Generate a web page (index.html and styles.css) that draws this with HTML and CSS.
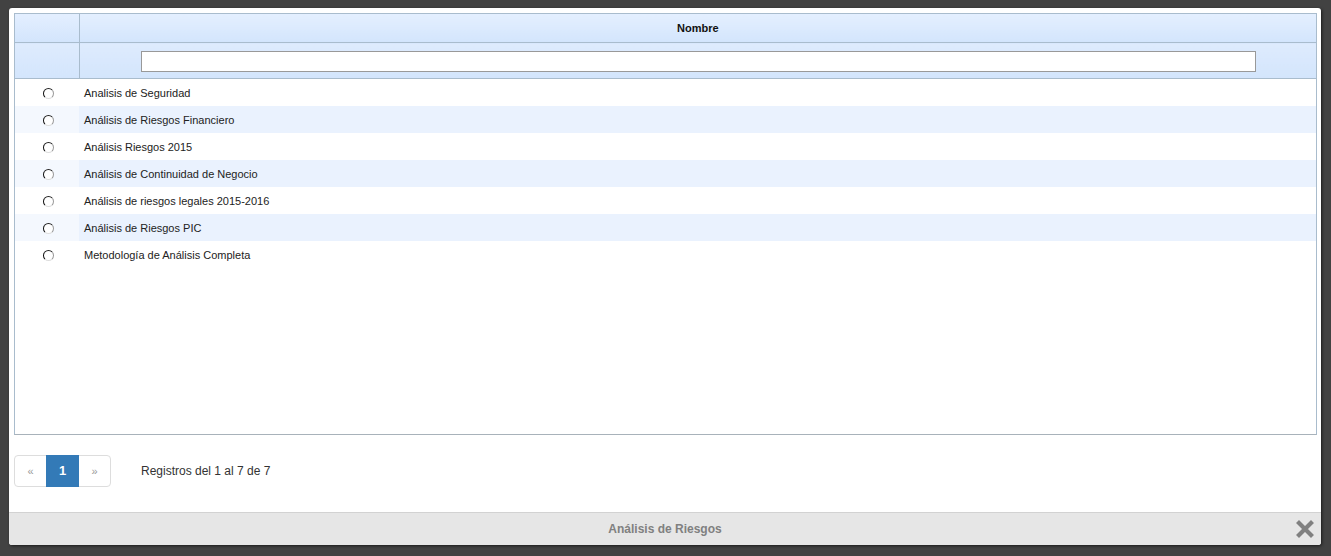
FILE: index.html
```html
<!DOCTYPE html>
<html lang="es">
<head>
    <meta charset="UTF-8">
    <title>Análisis de Riesgos</title>
    <link rel="stylesheet" href="styles.css">
</head>
<body>
    <div class="dialog">
        <div class="dialog-body">
            <div class="grid">
                <table class="grid-table">
                    <colgroup>
                        <col class="col-check">
                        <col>
                    </colgroup>
                    <thead>
                        <tr class="head-row">
                            <th></th>
                            <th>Nombre</th>
                        </tr>
                        <tr class="filter-row">
                            <th></th>
                            <th><input type="text" class="filter-input"></th>
                        </tr>
                    </thead>
                    <tbody>
                        <tr><td><span class="radio"></span></td><td>Analisis de Seguridad</td></tr>
                        <tr class="alt"><td><span class="radio"></span></td><td>Análisis de Riesgos Financiero</td></tr>
                        <tr><td><span class="radio"></span></td><td>Análisis Riesgos 2015</td></tr>
                        <tr class="alt"><td><span class="radio"></span></td><td>Análisis de Continuidad de Negocio</td></tr>
                        <tr><td><span class="radio"></span></td><td>Análisis de riesgos legales 2015-2016</td></tr>
                        <tr class="alt"><td><span class="radio"></span></td><td>Análisis de Riesgos PIC</td></tr>
                        <tr><td><span class="radio"></span></td><td>Metodología de Análisis Completa</td></tr>
                    </tbody>
                </table>
            </div>

            <div class="pager-row">
                <ul class="pagination">
                    <li><a href="#">&laquo;</a></li>
                    <li class="active"><a href="#">1</a></li>
                    <li><a href="#">&raquo;</a></li>
                </ul>
                <span class="records">Registros del 1 al 7 de 7</span>
            </div>
        </div>

        <div class="dialog-footer">
            <span class="dialog-title">Análisis de Riesgos</span>
            <a href="#" class="close-btn" title="Cerrar">
                <svg width="18" height="18" viewBox="0 0 18 18">
                    <path d="M3 3 L15 15 M15 3 L3 15" stroke="#808080" stroke-width="4.2" stroke-linecap="square"/>
                </svg>
            </a>
        </div>
    </div>
</body>
</html>
```

FILE: styles.css
```css
body {
    margin: 0;
    padding: 0;
    background-color: #424242;
    font-family: Arial, "Liberation Sans", sans-serif;
    height: 556px;
    overflow: hidden;
}

.dialog {
    margin: 8px 0 0 9px;
    width: 1312px;
    height: 537px;
    background: #fff;
    border-radius: 3px;
    box-shadow: 1px 1px 3px rgba(0, 0, 0, 0.6);
    display: flex;
    flex-direction: column;
    overflow: hidden;
}

.dialog-body {
    flex: 1;
    padding: 5px 4px 0 5px;
}

.grid {
    height: 420px;
    border: 1px solid #a9bccd;
    border-bottom-color: #a8b2ba;
    background: #fff;
}

.grid-table {
    width: 100%;
    border-collapse: collapse;
    table-layout: fixed;
    font-size: 11px;
    color: #222;
}

.col-check {
    width: 64px;
}

.grid-table th {
    background: linear-gradient(#e4efff, #d3e5fc);
    border-right: 1px solid #a9bccd;
    border-bottom: 1px solid #a9bccd;
    padding: 0;
    font-weight: bold;
    color: #111;
}

.grid-table th:last-child {
    border-right: none;
}

.head-row th {
    height: 28px;
}

.filter-row th {
    height: 35px;
    background: linear-gradient(#deebfd, #d3e5fc);
}

.filter-input {
    display: block;
    margin: 1px auto 0;
    width: 1115px;
    height: 21px;
    box-sizing: border-box;
    border: 1px solid #999;
    background: #fff;
    padding: 0 3px;
    position: relative;
    left: 1px;
}

.grid-table td {
    height: 27px;
    padding: 0 0 0 5px;
}

.grid-table td:first-child {
    text-align: center;
    padding: 0;
}

.grid-table tr.alt td {
    background: #eaf2fe;
}

.grid-table tr.alt td:first-child {
    background: #f4f8fe;
}

.radio {
    display: inline-block;
    width: 9px;
    height: 9px;
    border-radius: 50%;
    border: 1px solid;
    border-color: #222 #999 #ddd #111;
    background: #fff;
    vertical-align: middle;
    margin-left: 2px;
}

.pager-row {
    display: flex;
    align-items: center;
    margin-top: 20px;
}

.pagination {
    list-style: none;
    margin: 0;
    padding: 0;
    display: flex;
}

.pagination a {
    display: block;
    width: 31px;
    height: 30px;
    line-height: 30px;
    text-align: center;
    text-decoration: none;
    font-size: 11px;
    color: #999;
    border: 1px solid #ddd;
    margin-left: -1px;
    background: #fff;
}

.pagination li:first-child a {
    margin-left: 0;
    border-radius: 4px 0 0 4px;
}

.pagination li:last-child a {
    border-radius: 0 4px 4px 0;
}

.pagination li.active a {
    background: #337ab7;
    border-color: #337ab7;
    color: #fff;
    font-size: 13px;
    font-weight: bold;
    position: relative;
}

.records {
    margin-left: 30px;
    font-size: 12px;
    color: #333;
}

.dialog-footer {
    height: 32px;
    border-top: 1px solid #d2d2d2;
    background: #e6e6e6;
    display: flex;
    align-items: center;
    justify-content: center;
    position: relative;
}

.dialog-title {
    font-size: 12px;
    font-weight: bold;
    color: #808080;
}

.close-btn {
    position: absolute;
    right: 7px;
    top: 7px;
    display: block;
    width: 18px;
    height: 18px;
}
```
